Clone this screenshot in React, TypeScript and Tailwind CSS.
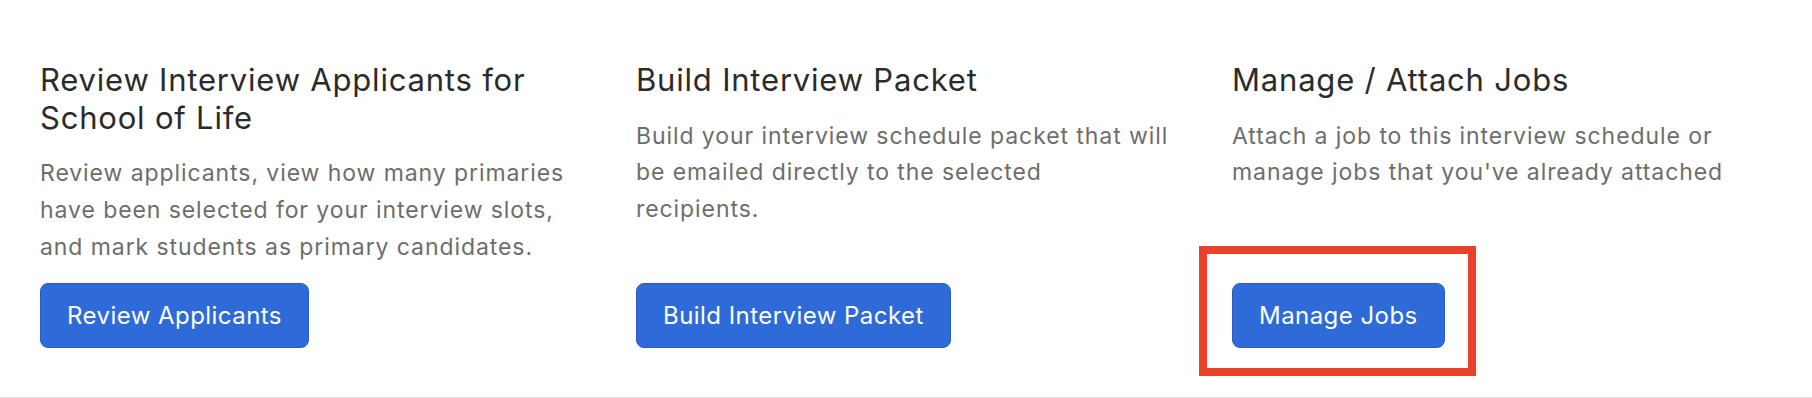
import React from "react";

type Card = {
  title: string;
  body: string;
  action: string;
  highlight?: boolean;
};

const cards: Card[] = [
  {
    title: "Review Interview Applicants for School of Life",
    body: "Review applicants, view how many primaries have been selected for your interview slots, and mark students as primary candidates.",
    action: "Review Applicants",
  },
  {
    title: "Build Interview Packet",
    body: "Build your interview schedule packet that will be emailed directly to the selected recipients.",
    action: "Build Interview Packet",
  },
  {
    title: "Manage / Attach Jobs",
    body: "Attach a job to this interview schedule or manage jobs that you've already attached",
    action: "Manage Jobs",
    highlight: true,
  },
];

const ActionCard = ({ card }: { card: Card }) => {
  return (
    <div className="flex flex-col">
      <h2 className="text-[31px] leading-[37.6px] tracking-[0.8px] text-[#2b2b2b] font-normal">{card.title}</h2>
      <p className="mt-[19px] text-[23px] leading-[36.7px] tracking-[0.92px] text-[#6d6d6d]">{card.body}</p>
      <div className="mt-auto pt-[18px]">
        <div className="relative inline-block">
          <button className="h-[65px] px-[26px] rounded-[8px] bg-[#2e6bd9] border border-[#2a5ec2] text-white text-[24px] tracking-[0.45px]">
            {card.action}
          </button>
          {card.highlight && (
            <div className="absolute -left-[33px] -top-[37px] -right-[31px] -bottom-[28px] border-[8px] border-[#ea4129] pointer-events-none" />
          )}
        </div>
      </div>
    </div>
  );
};

export default function App() {
  return (
    <div
      className="w-[1812px] h-[398px] bg-white border-b border-[#e2e2e2] px-[40px] pt-[61px]"
      style={{ fontFamily: "Inter, 'Noto Sans', sans-serif" }}
    >
      <div className="grid grid-cols-[534px_534px_534px] gap-x-[62px]">
        {cards.map((card) => (
          <ActionCard key={card.action} card={card} />
        ))}
      </div>
    </div>
  );
}
